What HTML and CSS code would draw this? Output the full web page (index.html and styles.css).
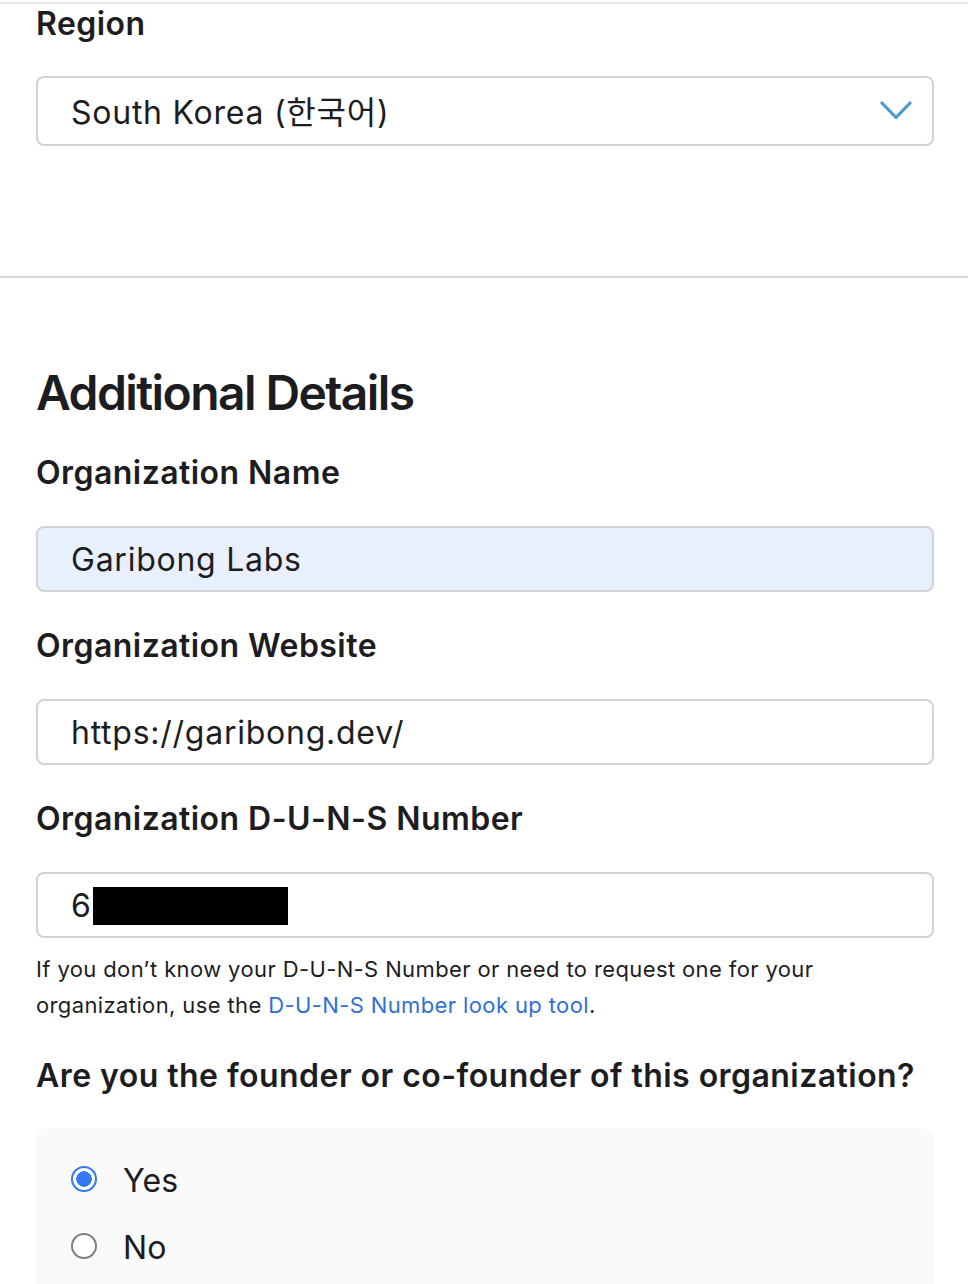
FILE: index.html
```html
<!DOCTYPE html>
<html lang="en">
<head>
<meta charset="utf-8">
<title>Additional Details</title>
<link rel="stylesheet" href="styles.css">
</head>
<body>
<div class="topline"></div>
<section class="block region">
  <div class="label">Region</div>
  <div class="field select">
    <span class="value">South Korea (한국어)</span>
    <svg class="chev" width="32" height="19" viewBox="0 0 32 19"><polyline points="2,2 16,16.5 30,2" fill="none" stroke="#4b9ad6" stroke-width="3.2" stroke-linecap="round" stroke-linejoin="round"/></svg>
  </div>
</section>
<div class="divider"></div>
<section class="block details">
  <h2 class="heading">Additional Details</h2>
  <div class="label">Organization Name</div>
  <div class="field autofill"><span class="value">Garibong Labs</span></div>
  <div class="label">Organization Website</div>
  <div class="field"><span class="value">https://garibong.dev/</span></div>
  <div class="label">Organization D-U-N-S Number</div>
  <div class="field"><span class="value">6<span class="redact"></span></span></div>
  <p class="help">If you don’t know your D-U-N-S Number or need to request one for your organization, use the <a href="#">D-U-N-S Number look up tool</a>.</p>
  <div class="label question">Are you the founder or co-founder of this organization?</div>
  <div class="radios">
    <label class="radio"><span class="dot checked"></span><span class="rtext">Yes</span></label>
    <label class="radio"><span class="dot"></span><span class="rtext">No</span></label>
  </div>
</section>
</body>
</html>
```
FILE: styles.css
```css
* { box-sizing: border-box; }
html, body { margin: 0; padding: 0; background: #fff; }
body {
  font-family: Inter, "Noto Sans CJK KR", sans-serif;
  color: #1d1d1f;
  width: 968px;
  height: 1284px;
  overflow: hidden;
}
.topline {
  margin-top: 2px;
  height: 2px;
  background: #e6e6e6;
}
.block { padding: 0 34px 0 36px; }
.label {
  font-size: 32px;
  line-height: 40px;
  font-weight: 600;
  letter-spacing: 0.45px;
}
.field {
  margin-top: 32.6px;
  height: 66px;
  border: 2px solid #d2d2d7;
  border-radius: 8px;
  display: flex;
  align-items: center;
  padding: 2px 34px 0 33px;
  font-size: 32px;
  line-height: 40px;
  letter-spacing: 0.75px;
}
.region .field { margin-top: 32px; height: 70px; padding-top: 3px; }
.select { justify-content: space-between; padding-right: 20px; }
.chev { margin-top: -4px; }
.value { display: flex; align-items: center; white-space: nowrap; }
.autofill { background: #e8f0fe; }
.redact {
  display: inline-block;
  width: 195px;
  height: 38px;
  background: #000;
  margin-left: 1px;
}
.divider {
  margin-top: 130px;
  height: 2px;
  background: #d6d6d9;
}
.heading {
  margin: 86.6px 0 0;
  font-size: 48px;
  line-height: 56px;
  font-weight: 600;
  letter-spacing: -1.6px;
}
.heading + .label { margin-top: 32.8px; }
.field + .label { margin-top: 34.4px; }
.help {
  margin: 13px 0 0;
  font-size: 22px;
  line-height: 36px;
  letter-spacing: 0.38px;
  width: 840px;
}
.help a { color: #2f6fd6; text-decoration: none; }
.question { margin-top: 33.4px; }
.radios {
  margin-top: 31.6px;
  background: #fafafa;
  border-radius: 12px;
  padding: 33.4px 36px 40px;
  display: flex;
  flex-direction: column;
  gap: 27px;
}
.radio {
  display: flex;
  align-items: center;
  font-size: 32px;
  line-height: 40px;
  letter-spacing: 0.2px;
}
.dot {
  width: 26px;
  height: 26px;
  border-radius: 50%;
  border: 2px solid #7d7d7d;
  background: #fff;
  margin: -4px 26px 0 -1px;
  flex: none;
}
.dot.checked {
  border: 2.5px solid #3478f6;
  background: radial-gradient(circle, #3478f6 0 7.5px, #fff 8px);
}
```
